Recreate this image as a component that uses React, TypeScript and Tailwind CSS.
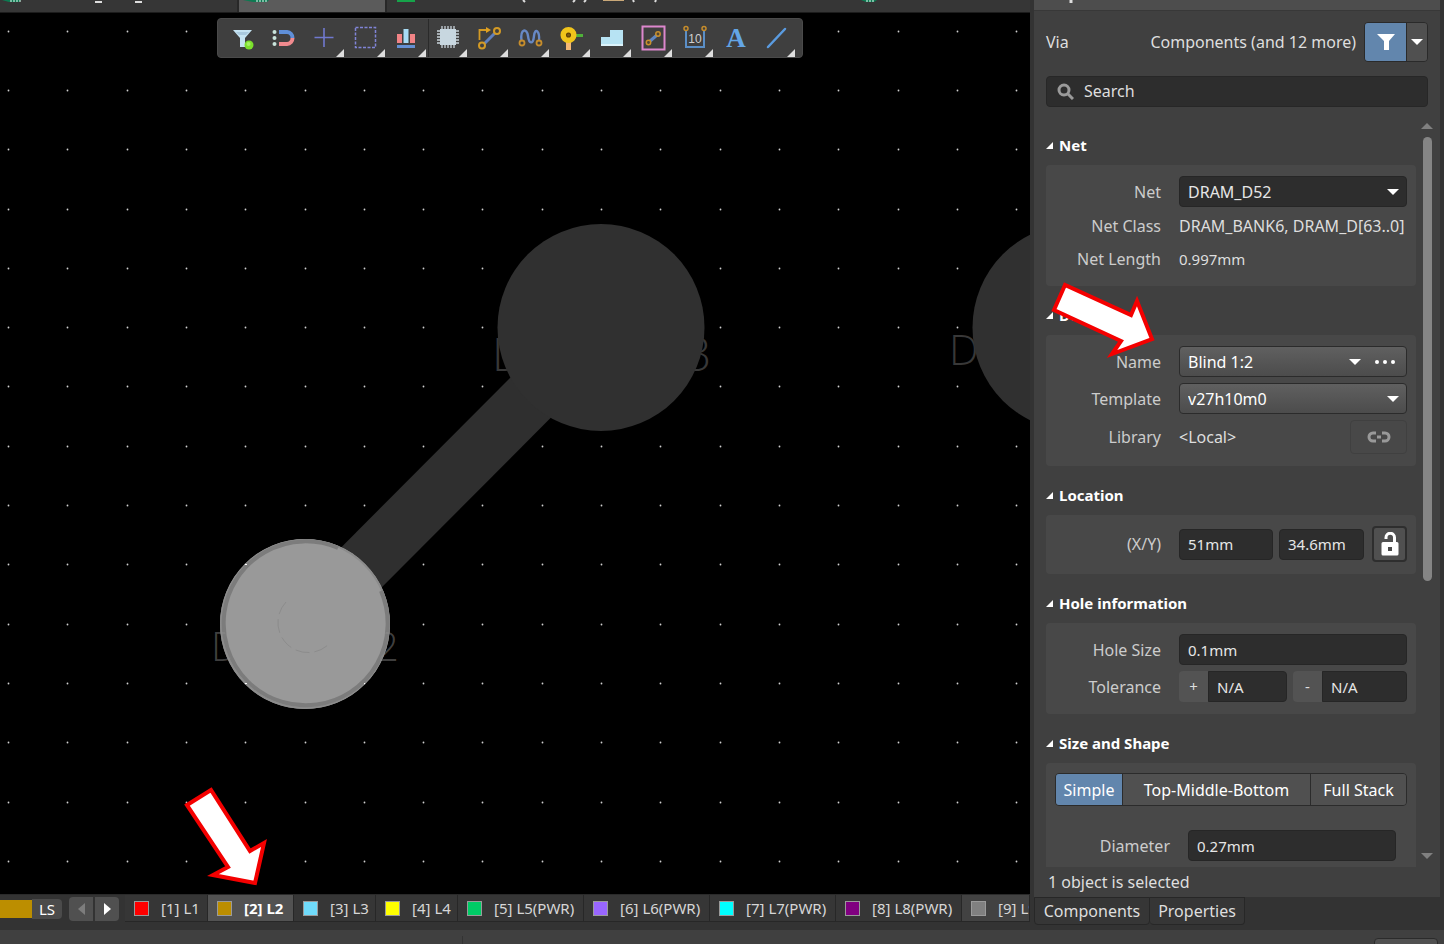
import { useState } from 'react'
import type { ReactNode } from 'react'

type Tool = { name: string; menu?: boolean; divider?: boolean; icon: ReactNode }
type Layer = { id: number; name: string; color: string; width: string }

const layers: Layer[] = [
  { id: 1, name: 'L1', color: 'bg-[#ff0000]', width: 'w-[83px] shrink-0' },
  { id: 2, name: 'L2', color: 'bg-[#bc8e00]', width: 'w-[86px] shrink-0' },
  { id: 3, name: 'L3', color: 'bg-[#70dbfa]', width: 'w-[82px] shrink-0' },
  { id: 4, name: 'L4', color: 'bg-[#ffff00]', width: 'w-[82px] shrink-0' },
  { id: 5, name: 'L5(PWR)', color: 'bg-[#00cc66]', width: 'w-[126px] shrink-0' },
  { id: 6, name: 'L6(PWR)', color: 'bg-[#9966ff]', width: 'w-[126px] shrink-0' },
  { id: 7, name: 'L7(PWR)', color: 'bg-[#00ffff]', width: 'w-[126px] shrink-0' },
  { id: 8, name: 'L8(PWR)', color: 'bg-[#800080]', width: 'w-[126px] shrink-0' },
  { id: 9, name: 'L9', color: 'bg-[#808080]', width: 'min-w-0 flex-1 overflow-hidden' },
]

const tools: Tool[] = [
  {
    name: 'Selection filter',
    icon: (
      <>
        <path d="M1 3h19l-7 8v9H8v-9z" fill="#c5e3f2" />
        <path d="M4 5h13l-3 3H7z" fill="#a9c9de" />
        <circle cx="17" cy="18" r="4.500" fill="#7be02c" />
        <circle cx="16.500" cy="17" r="2" fill="#a5f062" />
      </>
    ),
  },
  {
    name: 'Snapping',
    icon: (
      <>
        <path d="M6 5h8a6 6 0 0 1 5.500 6" fill="none" stroke="#5f8fd8" strokeWidth="4" />
        <path d="M6 17h8a6 6 0 0 0 5.500-6" fill="none" stroke="#f08a8e" strokeWidth="4" />
        <g fill="#c9e4dc"><circle cx="1.500" cy="5" r="2" /><circle cx="1.500" cy="11" r="2" /><circle cx="1.500" cy="17" r="2" /></g>
      </>
    ),
  },
  {
    name: 'Origin',
    menu: true,
    icon: <path d="M10 1v19M.5 10.500h19" stroke="#7079cf" strokeWidth="1.600" />,
  },
  {
    name: 'Select area',
    menu: true,
    icon: <rect x="0.500" y="0.500" width="20" height="20" fill="none" stroke="#8084d6" strokeWidth="1.500" strokeDasharray="3 1.500" />,
  },
  {
    name: 'Align',
    menu: true,
    icon: (
      <>
        <path d="M1 7h5v9H1zM14 7h5v9h-5z" fill="#f28486" />
        <path d="M7.500 2h5v14h-5z" fill="#a8dcf5" />
        <path d="M1 18h18v3H1z" fill="#6590d4" />
      </>
    ),
  },
  {
    name: 'Place component',
    menu: true,
    divider: true,
    icon: (
      <>
        <path d="M4 -1v22M7 -1v22M10 -1v22M13 -1v22M16 -1v22M-1 4h22M-1 7h22M-1 10h22M-1 13h22M-1 16h22" stroke="#c9d3da" strokeWidth="1.300" />
        <rect x="2" y="2" width="16" height="16" fill="#c8d7e0" />
      </>
    ),
  },
  {
    name: 'Route track',
    menu: true,
    icon: (
      <>
        <path d="M6 17L18 5" stroke="#5f7fbd" strokeWidth="3" />
        <path d="M1.500 13V3h8" fill="none" stroke="#d39a25" strokeWidth="1.800" />
        <path d="M8 0l5 3-5 3z" fill="#e0a020" />
        <g fill="#3f3f3f" stroke="#d39a25" strokeWidth="2"><circle cx="4" cy="18.500" r="3" /><circle cx="19" cy="4" r="3" /></g>
      </>
    ),
  },
  {
    name: 'Tune length',
    menu: true,
    icon: (
      <>
        <path d="M2.500 14C1 1 8 1 9 9s5 9 6 0 6-5 5 5" fill="none" stroke="#6788c4" strokeWidth="2.400" />
        <g fill="#3f3f3f" stroke="#c68d2c" strokeWidth="1.800"><circle cx="3" cy="16" r="2.500" /><circle cx="20" cy="16" r="2.500" /></g>
      </>
    ),
  },
  {
    name: 'Place via',
    menu: true,
    icon: (
      <>
        <path d="M14 7h9v3h-9z" fill="#4fb13a" />
        <path d="M6 15h5v8H6z" fill="#f5b873" />
        <circle cx="8.500" cy="8" r="5.300" fill="#5b3d06" stroke="#f0c41b" strokeWidth="5.500" />
        <circle cx="8.500" cy="8" r="1.500" fill="#7a5b12" />
      </>
    ),
  },
  {
    name: 'Place polygon',
    menu: true,
    icon: (
      <>
        <path d="M0 10h9V3h13v16H0z" fill="#b7e3f3" />
        <path d="M0 17h22v2H0z" fill="#dcf3fb" />
      </>
    ),
  },
  {
    name: 'Place room',
    menu: true,
    icon: (
      <>
        <rect x="0.500" y="-0.500" width="22" height="23" fill="none" stroke="#dd87cd" strokeWidth="2" />
        <path d="M7 15l8-7" stroke="#5f86c2" strokeWidth="3" />
        <g fill="#544631" stroke="#c9902c" strokeWidth="1.500"><circle cx="6.500" cy="15.500" r="2.200" /><circle cx="16" cy="7" r="2.200" /></g>
      </>
    ),
  },
  {
    name: 'Place dimension',
    menu: true,
    icon: (
      <>
        <path d="M3 4v16h18V4" fill="none" stroke="#5b8fc7" strokeWidth="2" />
        <g fill="#3f3f3f" stroke="#c68d2c" strokeWidth="1.500"><circle cx="3" cy="1.500" r="2" /><circle cx="21" cy="1.500" r="2" /></g>
        <text x="12" y="16" textAnchor="middle" fill="#cfcfcf" fontSize="12" fontFamily="Liberation Sans, sans-serif">10</text>
      </>
    ),
  },
  {
    name: 'Place string',
    icon: <text x="12" y="20" textAnchor="middle" fill="#63a5e6" fontSize="27" fontWeight="bold" fontFamily="Liberation Serif, serif">A</text>,
  },
  {
    name: 'Place line',
    menu: true,
    icon: <path d="M3 20L20 2" stroke="#5a9be0" strokeWidth="2.500" strokeLinecap="round" />,
  },
]

const gridX = Array.from({ length: 18 }, (_, i) => Math.round(8 + i * 59.3))
const gridY = Array.from({ length: 15 }, (_, i) => Math.round(30.7 + i * 59.3))

function Caret({ className = '', color = 'fill-white' }: { className?: string; color?: string }) {
  return (
    <svg viewBox="0 0 12 6" className={`h-1.5 w-3 shrink-0 ${color} ${className}`} aria-hidden="true">
      <path d="M0 0h12L6 6z" />
    </svg>
  )
}

function DocumentTabs() {
  return (
    <div className="flex h-[13px] shrink-0 overflow-hidden border-b border-[#1c1c1c] bg-[#363636]">
      <div className="w-[239px] border-r-2 border-[#282828]">
        <svg className="h-3 w-full" aria-hidden="true">
          <path d="M2 0h19l-2 2H9z" fill="#0d7a52" />
          <path d="M11 0v2M14 0v2M17 0v2M20 0v2" stroke="#e8fff5" />
          <path d="M95 2h7M135 2h7" stroke="#ddd" strokeWidth="2" />
        </svg>
      </div>
      <div className="w-[146px] bg-[#5b5b5b]">
        <svg className="h-3 w-full" aria-hidden="true">
          <path d="M4 0h26l-2 2H14z" fill="#0d7a52" />
          <path d="M18 0v2M21 0v2M24 0v2M27 0v2" stroke="#e8fff5" />
        </svg>
      </div>
      <div className="flex-1 border-l-2 border-[#282828]">
        <svg className="h-3 w-full" aria-hidden="true">
          <path d="M10 0h18v2H10z" fill="#16a34a" />
          <path d="M136 0l2 2M197 2l2-2M188 0l-2 2M246 0l1 2M268 2l1-2" stroke="#ddd" strokeWidth="2" fill="none" />
          <path d="M216 0h21v1h-21z" fill="#c9a878" />
          <path d="M474 0h16l-3 2h-8z" fill="#0d7a52" />
          <path d="M480 0v2M483 0v2M486 0v2" stroke="#e8fff5" />
        </svg>
      </div>
    </div>
  )
}

function Toolbar() {
  return (
    <div className="absolute left-[217px] top-[5px] flex h-10 rounded-sm border border-[#4a4a4a] bg-[#3f3f3f] px-[5px]">
      {tools.map(t => (
        <button key={t.name} aria-label={t.name} className={`relative flex w-[41px] items-center justify-center ${t.divider ? 'border-l border-[#2a2a2a]' : ''}`}>
          <svg viewBox="-1 -1 25 25" className="size-[25px] overflow-visible">{t.icon}</svg>
          {t.menu && (
            <svg viewBox="0 0 8 8" className="absolute bottom-0 right-0.5 size-2 fill-[#dedede]"><path d="M8 0v8H0z" /></svg>
          )}
        </button>
      ))}
    </div>
  )
}

function Board() {
  return (
    <svg viewBox="0 13 1030 881" preserveAspectRatio="xMinYMin slice" className="absolute inset-0 h-full w-full" role="img" aria-label="PCB layout">
      <g fill="#d0d0d0">
        {gridY.map(y => gridX.map(x => <circle key={`${x}-${y}`} cx={x + 0.5} cy={y + 0.5} r="0.900" />))}
      </g>
      <g fill="#383838" fontFamily="Open Sans, sans-serif" fontWeight="300">
        <text x="492" y="371" fontSize="46">D</text>
        <text x="685" y="371" fontSize="46">3</text>
        <text x="949" y="365" fontSize="42">D</text>
      </g>
      <path d="M325 604L580 348" stroke="#2f2f2f" strokeWidth="57" />
      <circle cx="601" cy="327.500" r="103.500" fill="#303030" />
      <circle cx="1076" cy="327.500" r="103.500" fill="#303030" />
      <circle cx="305" cy="624" r="85" fill="#999999" />
      <circle cx="305" cy="624" r="84" fill="none" stroke="#8c8c8c" strokeWidth="2" />
      <path d="M338 548A82 82 0 1 0 381 591" fill="none" stroke="#7c7c7c" strokeWidth="4" />
      <path d="M286 602A29 29 0 1 0 330 643" fill="none" stroke="#8c8c8c" strokeWidth="1" strokeDasharray="14 5" />
      <g fill="#8f8f8f" fillOpacity="0.450" fontFamily="Open Sans, sans-serif" fontWeight="300" fontSize="40">
        <text x="211" y="661" clipPath="url(#d-edge)">D</text>
        <text x="376" y="661" clipPath="url(#n-edge)">2</text>
      </g>
      <clipPath id="d-edge"><path d="M200 620h20l8 20 4 30h-32z" /></clipPath>
      <clipPath id="n-edge"><path d="M388 620h20v50h-30z" /></clipPath>
      <g fill="#ffffff">
        <rect x="245" y="564" width="2" height="1" />
        <rect x="245" y="683" width="2" height="1" />
        <rect x="364" y="683" width="1" height="1" />
      </g>
      <path d="M187 805L211 790L250 851L264 843L255 883L213 875L228 867Z" fill="#ffffff" stroke="#f40000" strokeWidth="4" />
    </svg>
  )
}

function LayerBar() {
  const [active, setActive] = useState(2)
  return (
    <div className="flex h-9 shrink-0 items-start overflow-hidden border-t border-[#2a2a2a] bg-[#333333] text-[15px] text-[#d6d6d6]">
      <div className="mt-[5px] h-[18px] w-8 shrink-0 bg-[#bc8e00]" />
      <button className="mt-1 h-5 w-[30px] shrink-0 rounded-r bg-[#4b4b4b] leading-5 text-white">LS</button>
      <div className="ml-[7px] mr-1.5 mt-0.5 flex h-6 w-[50px] shrink-0 rounded bg-[#505050]">
        <button aria-label="Previous layers" className="flex flex-1 items-center justify-center border-r-2 border-[#333333]">
          <svg viewBox="0 0 7 12" className="h-3 w-[7px] fill-[#7d7d7d]"><path d="M7 0v12L0 6z" /></svg>
        </button>
        <button aria-label="Next layers" className="flex flex-1 items-center justify-center">
          <svg viewBox="0 0 7 12" className="h-3 w-[7px] fill-white"><path d="M0 0v12l7-6z" /></svg>
        </button>
      </div>
      {layers.map(l => (
        <button
          key={l.id}
          onClick={() => setActive(l.id)}
          className={`flex h-[27px] items-center gap-3 whitespace-nowrap border-b border-r border-[#272727] pl-[9px] ${l.width} ${active === l.id ? 'bg-[#525252] font-bold text-white' : l.id === 9 ? 'bg-[#424242]' : 'bg-[#363636]'}`}
        >
          <span className={`size-[15px] shrink-0 border border-[#9a9a9a] ${l.color}`} />
          [{l.id}] {l.name}
        </button>
      ))}
    </div>
  )
}

function Section({ title, children, className = '', overlay }: { title: string; children: ReactNode; className?: string; overlay?: ReactNode }) {
  return (
    <section className="relative mb-[11px]">
      <h2 className="flex h-[38px] items-center gap-1.5 pb-px text-[15px] font-bold text-white">
        <svg viewBox="0 0 8 8" className="size-[7px] fill-white" aria-hidden="true"><path d="M8 0v8H0z" /></svg>
        {title}
      </h2>
      <div className={`rounded-sm bg-[#484848] pr-[9px] ${className}`}>{children}</div>
      {overlay}
    </section>
  )
}

function Row({ label, htmlFor, children, className = 'h-[31px]' }: { label: string; htmlFor?: string; children: ReactNode; className?: string }) {
  return (
    <div className={`flex items-center gap-[18px] ${className}`}>
      <label htmlFor={htmlFor} className="w-[115px] shrink-0 whitespace-nowrap text-right text-[#cccccc]">{label}</label>
      <div className="flex min-w-0 flex-1 items-center">{children}</div>
    </div>
  )
}

const fieldClass = 'h-[31px] min-w-0 rounded border border-[#262626] bg-[#2d2d2d] px-2 text-[#e6e6e6] outline-none'
const inputClass = `${fieldClass} text-[15px]`
const boxClass = 'rounded border border-[#2b2b2b] bg-linear-to-b from-[#606060] to-[#4c4c4c]'

function DefinitionArrow() {
  return (
    <svg viewBox="1046 280 114 80" className="pointer-events-none absolute -top-[17px] left-0 h-20 w-[114px]" aria-hidden="true">
      <path d="M1065 285L1054 310L1121 341L1112 354L1152 339L1137 301L1131 315Z" fill="#ffffff" stroke="#f40000" strokeWidth="4" />
    </svg>
  )
}

function PropertiesPanel() {
  const [shape, setShape] = useState('Simple')
  return (
    <aside className="flex w-[414px] shrink-0 flex-col border-x-4 border-[#333333] bg-[#404040] text-base text-[#dedede]">
      <div className="h-[11px] shrink-0 border-b border-[#383838] bg-[#4d4d4d]">
        <svg className="h-2.5 w-full" aria-hidden="true"><path d="M37 0v3" stroke="#ddd" strokeWidth="3" /></svg>
      </div>
      <header className="shrink-0 px-3">
        <div className="mt-[11px] flex h-10 items-center">
          <span>Via</span>
          <span className="ml-auto mr-2">Components (and 12 more)</span>
          <div className="flex h-10 w-16 overflow-hidden rounded border border-[#2a2a2a]">
            <button aria-label="Filter" className="flex flex-1 items-center justify-center border-r border-[#2a2a2a] bg-[#6286ad]">
              <svg viewBox="0 0 18 16" className="h-4 w-[18px] fill-white"><path d="M0 0h18l-6 7v9H7V7z" /></svg>
            </button>
            <button aria-label="Filter options" className="flex w-5 items-center justify-center bg-[#505050]"><Caret /></button>
          </div>
        </div>
        <label className="mt-3.5 flex h-[31px] items-center rounded border border-[#272727] bg-[#2d2d2d] pl-2.5">
          <svg viewBox="0 0 17 17" className="size-[17px]" aria-hidden="true">
            <circle cx="7" cy="7" r="5" fill="none" stroke="#9a9a9a" strokeWidth="3" />
            <path d="M11 11l5 5" stroke="#9a9a9a" strokeWidth="3" />
          </svg>
          <input aria-label="Search" placeholder="Search" className="mb-0.5 ml-2.5 min-w-0 flex-1 bg-transparent outline-none placeholder:text-[#dedede]" />
        </label>
      </header>

      <div className="mt-[13px] flex min-h-0 flex-1">
        <div className="min-w-0 flex-1 overflow-hidden pl-3 pt-[7px]">
          <Section title="Net" className="pb-2.5 pt-[11px]">
            <Row label="Net" htmlFor="net" className="mb-0.5 h-[31px]">
              <div className="relative flex-1">
                <select id="net" className={`${fieldClass} block w-full appearance-none`}><option>DRAM_D52</option></select>
                <Caret className="pointer-events-none absolute right-2 top-[13px]" />
              </div>
            </Row>
            <Row label="Net Class" className="h-[33px]"><span className="whitespace-nowrap">DRAM_BANK6, DRAM_D[63..0]</span></Row>
            <Row label="Net Length" className="h-[34px]"><span className="text-[15px]">0.997mm</span></Row>
          </Section>

          <Section title="Definition" className="space-y-1.5 pb-3 pt-[11px]" overlay={<DefinitionArrow />}>
            <Row label="Name" htmlFor="name">
              <div className={`relative flex h-[31px] flex-1 items-center ${boxClass}`}>
                <select id="name" className="h-full flex-1 appearance-none pl-2 text-white outline-none"><option>Blind 1:2</option></select>
                <Caret className="pointer-events-none absolute right-[45px] top-3" />
                <button aria-label="More names" className="flex h-full w-[42px] items-center justify-center">
                  <svg viewBox="0 0 20 4" className="h-1 w-5 fill-white"><circle cx="2" cy="2" r="2" /><circle cx="10" cy="2" r="2" /><circle cx="18" cy="2" r="2" /></svg>
                </button>
              </div>
            </Row>
            <Row label="Template" htmlFor="template">
              <div className={`relative flex h-[31px] flex-1 ${boxClass}`}>
                <select id="template" className="h-full flex-1 appearance-none pl-2 text-white outline-none"><option>v27h10m0</option></select>
                <Caret className="pointer-events-none absolute right-[7px] top-3" />
              </div>
            </Row>
            <Row label="Library" className="h-[34px]">
              <span>&lt;Local&gt;</span>
              <button aria-label="Library link" className="ml-auto flex h-[34px] w-[57px] items-center justify-center rounded border border-[#404040]">
                <svg viewBox="0 0 24 12" className="h-3 w-6" fill="none" stroke="#999999" strokeWidth="3">
                  <path d="M9 2H6a4 4 0 0 0 0 8h3M15 2h3a4 4 0 0 1 0 8h-3" />
                  <path d="M10 6h4" />
                </svg>
              </button>
            </Row>
          </Section>

          <Section title="Location" className="pb-3 pt-[11px]">
            <Row label="(X/Y)" htmlFor="loc-x" className="h-9">
              <input id="loc-x" defaultValue="51mm" className={`${inputClass} w-[94px]`} />
              <input aria-label="Y" defaultValue="34.6mm" className={`${inputClass} ml-1.5 w-[85px]`} />
              <button aria-label="Lock location" className="ml-auto flex h-9 w-[35px] items-center justify-center rounded border-2 border-[#2e2e2e] bg-[#505050]">
                <svg viewBox="0 0 18 24" className="h-6 w-[18px]">
                  <path d="M5 7V5.500a4 4 0 0 1 8.500 0V11" fill="none" stroke="#ffffff" strokeWidth="3" />
                  <path d="M2 10h14a1.500 1.500 0 0 1 1.500 1.500V22a1.500 1.500 0 0 1-1.500 1.500H2A1.500 1.500 0 0 1 .5 22V11.500A1.500 1.500 0 0 1 2 10z" fill="#ffffff" />
                  <rect x="7" y="15" width="4" height="4" fill="#4a4a4a" />
                </svg>
              </button>
            </Row>
          </Section>

          <Section title="Hole information" className="space-y-1.5 pb-3 pt-[11px]">
            <Row label="Hole Size" htmlFor="hole"><input id="hole" defaultValue="0.1mm" className={`${inputClass} flex-1`} /></Row>
            <Row label="Tolerance" htmlFor="tol-plus">
              <span className="flex h-[31px] w-[29px] shrink-0 items-center justify-center rounded-l bg-[#535353] text-[15px]">+</span>
              <input id="tol-plus" defaultValue="N/A" className={`${inputClass} w-[79px] rounded-l-none`} />
              <span className="ml-1.5 flex h-[31px] w-[29px] shrink-0 items-center justify-center rounded-l bg-[#535353] text-[15px]">-</span>
              <input aria-label="Negative tolerance" defaultValue="N/A" className={`${inputClass} flex-1 rounded-l-none`} />
            </Row>
          </Section>

          <Section title="Size and Shape" className="pb-4 pl-[9px] pt-2.5">
            <div className="flex h-[33px] overflow-hidden rounded border border-[#2b2b2b] text-white">
              {['Simple', 'Top-Middle-Bottom', 'Full Stack'].map(s => (
                <button
                  key={s}
                  onClick={() => setShape(s)}
                  className={`whitespace-nowrap border-r border-[#2b2b2b] last:border-r-0 ${s === 'Simple' ? 'w-[67px]' : s === 'Full Stack' ? 'w-[95px]' : 'flex-1'} ${shape === s ? 'bg-[#6286ad]' : 'bg-[#505050]'}`}
                >
                  {s}
                </button>
              ))}
            </div>
            <Row label="Diameter" htmlFor="diameter" className="mt-6 h-[31px] pr-[11px]">
              <input id="diameter" defaultValue="0.27mm" className={`${inputClass} flex-1`} />
            </Row>
          </Section>
        </div>
        <div className="flex w-6 shrink-0 flex-col items-center pb-2 pr-0.5 pt-[3px]">
          <Caret className="rotate-180" color="fill-[#808080]" />
          <div className="mt-2 flex w-[9px] flex-1"><div className="h-[62%] w-full rounded-full bg-[#858585]" /></div>
          <Caret color="fill-[#808080]" />
        </div>
      </div>

      <p className="h-[30px] shrink-0 pl-3.5 leading-[30px]">1 object is selected</p>
      <nav className="flex h-[33px] shrink-0 bg-[#333333]">
        <button className="h-7 w-[116px] rounded-b border border-[#272727] bg-[#363636]">Components</button>
        <button className="h-7 w-[95px] rounded-b border border-l-0 border-[#272727] bg-[#363636]">Properties</button>
      </nav>
    </aside>
  )
}

export default function App() {
  return (
    <div className="flex h-screen flex-col overflow-hidden bg-[#333333] font-['Noto_Sans',sans-serif]">
      <div className="flex min-h-0 flex-1">
        <main className="flex min-w-0 flex-1 flex-col">
          <DocumentTabs />
          <div className="relative min-h-0 flex-1 overflow-hidden bg-black">
            <Board />
            <Toolbar />
          </div>
          <LayerBar />
        </main>
        <PropertiesPanel />
      </div>
      <footer className="flex h-3.5 shrink-0 items-start overflow-hidden bg-[#404040]">
        <div className="mt-1.5 h-2 w-[463px] border-r border-[#333333]" />
        <button aria-label="Panels" className="ml-auto mr-1.5 mt-2 h-6 w-16 shrink-0 rounded border border-[#2b2b2b] bg-[#505050]" />
      </footer>
    </div>
  )
}
